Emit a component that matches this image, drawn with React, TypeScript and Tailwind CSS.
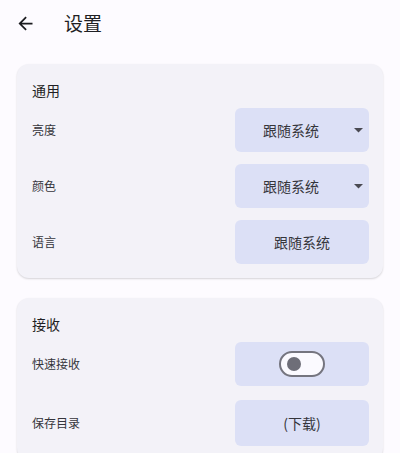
import React from 'react';

const FONT = { fontFamily: '"Noto Sans CJK SC", "Noto Sans", Roboto, sans-serif' };

function ArrowBack() {
  return (
    <svg width="21" height="21" viewBox="0 0 24 24" fill="#1b1b1f">
      <path d="M20 11H7.83l5.59-5.59L12 4l-8 8 8 8 1.41-1.41L7.83 13H20v-2z" />
    </svg>
  );
}

function DropButton({ label }: { label: string }) {
  return (
    <div className="flex h-[44px] w-[134px] items-center rounded-[6px] bg-[#dce0f6]">
      <span className="flex-1 text-center text-[14px] text-[#35353b]">{label}</span>
      <span className="flex w-[22px] justify-center">
        <svg width="9" height="5" viewBox="0 0 9 5">
          <path d="M0 0h9L4.5 4.5z" fill="#4a4a52" />
        </svg>
      </span>
    </div>
  );
}

function PlainButton({ label, tall }: { label: string; tall?: boolean }) {
  return (
    <div
      className={
        tall
          ? 'flex h-[46px] w-[134px] items-center justify-center rounded-[6px] bg-[#dce0f6] text-[14px] text-[#35353b]'
          : 'flex h-[44px] w-[134px] items-center justify-center rounded-[6px] bg-[#dce0f6] text-[14px] text-[#35353b]'
      }
    >
      {label}
    </div>
  );
}

function Switch() {
  return (
    <div className="flex h-[44px] w-[134px] items-center justify-center rounded-[6px] bg-[#dce0f6]">
      <div className="flex h-[26px] w-[46px] items-center rounded-full border-2 border-[#75757f] bg-[#fbfaff] pl-[6px]">
        <div className="h-[14px] w-[14px] rounded-full bg-[#6e6e78]" />
      </div>
    </div>
  );
}

function Row({ label, children }: { label: string; children: React.ReactNode }) {
  return (
    <div className="flex items-center justify-between">
      <span className="text-[12px] text-[#35353b]">{label}</span>
      {children}
    </div>
  );
}

function Card({ title, children }: { title: string; children: React.ReactNode }) {
  return (
    <div className="rounded-[12px] bg-[#f3f2f8] pb-[14px] pl-[15px] pr-[14px] pt-[14px] shadow-[0_1px_2px_rgba(0,0,0,0.16)]">
      <div className="mb-[6px] flex h-[24px] items-center text-[14px] text-[#1f1f24]">{title}</div>
      <div className="flex flex-col gap-[12px]">{children}</div>
    </div>
  );
}

export default function App() {
  return (
    <div className="h-[453px] w-[400px] overflow-hidden bg-[#fdfbff]" style={FONT}>
      <div className="flex h-[46px] items-center pl-[15px]">
        <ArrowBack />
        <span className="ml-[28px] text-[19px] text-[#1f1f24]">设置</span>
      </div>
      <div className="mt-[18px] flex flex-col gap-[20px] px-[17px]">
        <Card title="通用">
          <Row label="亮度">
            <DropButton label="跟随系统" />
          </Row>
          <Row label="颜色">
            <DropButton label="跟随系统" />
          </Row>
          <Row label="语言">
            <PlainButton label="跟随系统" />
          </Row>
        </Card>
        <Card title="接收">
          <Row label="快速接收">
            <Switch />
          </Row>
          <div className="mt-[2px]">
            <Row label="保存目录">
              <PlainButton label="(下载)" tall />
            </Row>
          </div>
        </Card>
      </div>
    </div>
  );
}
